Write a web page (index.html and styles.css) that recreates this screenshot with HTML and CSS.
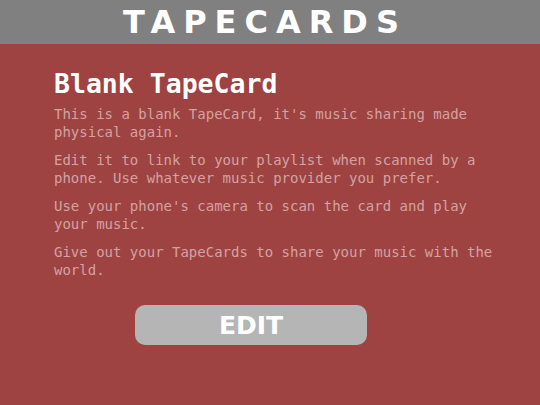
FILE: index.html
```html
<!DOCTYPE html>
<html lang="en">
<head>
    <meta charset="UTF-8">
    <meta name="viewport" content="width=device-width, initial-scale=1.0">
    <title>TapeCards</title>
    <link rel="stylesheet" href="styles.css">
</head>
<body>
    <header class="topbar">
        <div class="brand">TAPECARDS</div>
    </header>

    <main class="card">
        <h1>Blank TapeCard</h1>
        <p>This is a blank TapeCard, it's music sharing made physical again.</p>
        <p>Edit it to link to your playlist when scanned by a phone. Use whatever music provider you prefer.</p>
        <p>Use your phone's camera to scan the card and play your music.</p>
        <p>Give out your TapeCards to share your music with the world.</p>
        <button class="edit-btn">EDIT</button>
    </main>
</body>
</html>
```

FILE: styles.css
```css
html, body {
    margin: 0;
    height: 100%;
}
body {
    background-color: #9e4242;
    font-family: "DejaVu Sans Mono", "Liberation Mono", monospace;
}
.topbar {
    background-color: #808080;
    height: 44px;
    display: flex;
    align-items: center;
    justify-content: center;
}
.brand {
    color: #fff;
    font-family: "DejaVu Sans", sans-serif;
    font-weight: bold;
    font-size: 32px;
    letter-spacing: 8px;
    margin-right: 10px;
}
.card {
    padding: 24px 0 0 54px;
    width: 450px;
}
h1 {
    margin: 0 0 5px;
    color: #fff;
    font-size: 26.5px;
    font-weight: bold;
    line-height: 32px;
}
p {
    margin: 0 0 10px;
    color: #d3a3a3;
    font-size: 14px;
    line-height: 18px;
}
.edit-btn {
    display: block;
    margin: 26px 0 0 81px;
    width: 232px;
    height: 40px;
    border: none;
    border-radius: 10px;
    background-color: #b5b5b5;
    color: #fff;
    font-family: "DejaVu Sans", sans-serif;
    font-weight: bold;
    font-size: 25px;
    cursor: pointer;
}
```
